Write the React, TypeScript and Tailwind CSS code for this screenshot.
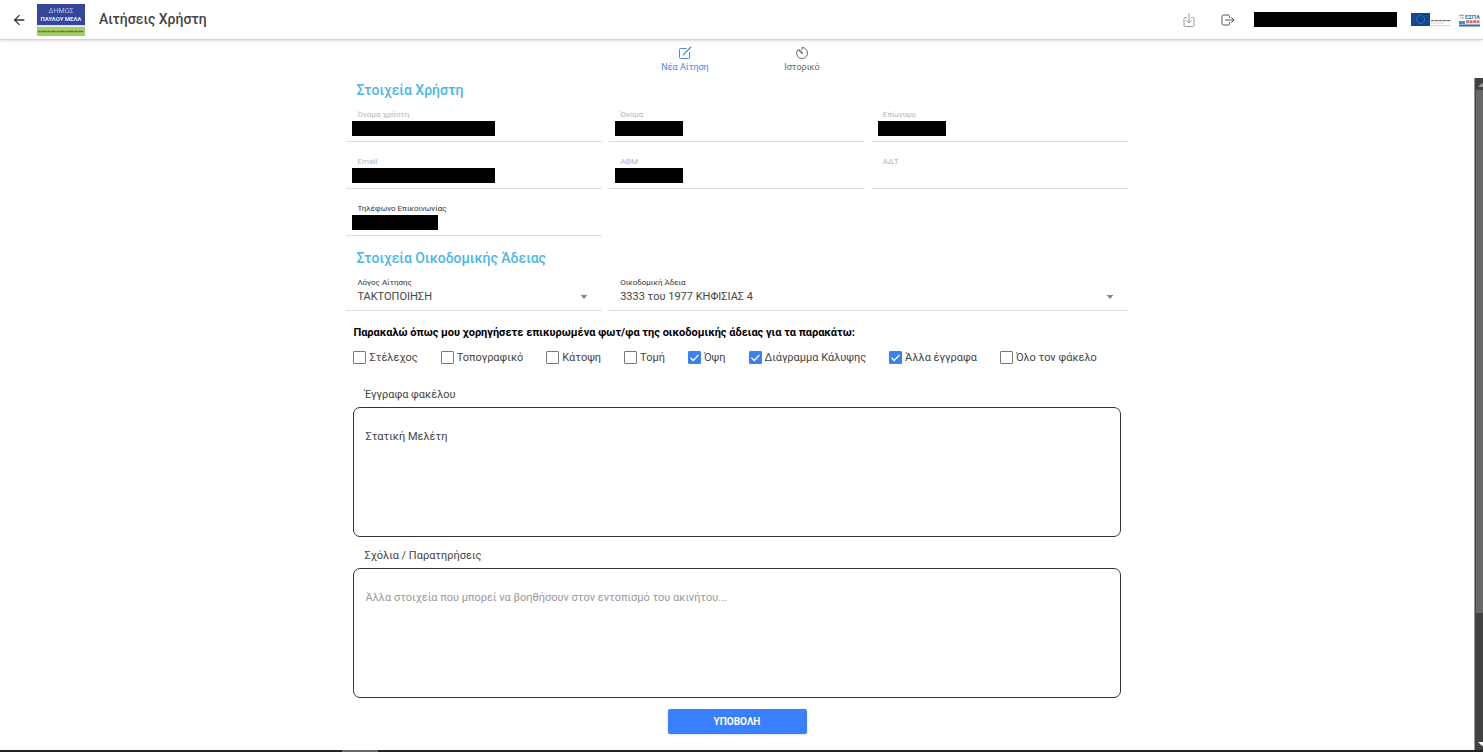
import { useState } from 'react'
import { IoDownloadOutline, IoLogOutOutline } from 'react-icons/io5'
import { MdArrowBack } from 'react-icons/md'

const userFields = [
  { id: 'username', label: 'Όνομα χρήστη', bar: 'w-[143px]', disabled: true },
  { id: 'firstName', label: 'Όνομα', bar: 'w-[68px]', disabled: true },
  { id: 'lastName', label: 'Επώνυμο', bar: 'w-[68px]', disabled: true },
  { id: 'email', label: 'Email', bar: 'w-[143px]', disabled: true },
  { id: 'afm', label: 'ΑΦΜ', bar: 'w-[68px]', disabled: true },
  { id: 'adt', label: 'ΑΔΤ', bar: '', disabled: true },
  { id: 'phone', label: 'Τηλέφωνο Επικοινωνίας', bar: 'w-[86px]', disabled: false },
]

const documents = [
  { id: 'stelexos', label: 'Στέλεχος', checked: false },
  { id: 'topografiko', label: 'Τοπογραφικό', checked: false },
  { id: 'katopsi', label: 'Κάτοψη', checked: false },
  { id: 'tomi', label: 'Τομή', checked: false },
  { id: 'opsi', label: 'Όψη', checked: true },
  { id: 'diagramma', label: 'Διάγραμμα Κάλυψης', checked: true },
  { id: 'alla', label: 'Άλλα έγγραφα', checked: true },
  { id: 'olo', label: 'Όλο τον φάκελο', checked: false },
]

const MunicipalityLogo = () => (
  <svg viewBox="0 0 48 32" className="h-8 w-12" role="img" aria-label="Δήμος Παύλου Μελά">
    <rect width="48" height="21" fill="#35459a" />
    <rect y="21" width="48" height="2" fill="#dfe5f2" />
    <rect y="23" width="48" height="9" fill="#a5cf63" />
    <text x="24" y="9" textAnchor="middle" fontSize="7" fill="#b9c3e6">ΔΗΜΟΣ</text>
    <text x="24" y="17" textAnchor="middle" fontSize="6" fontWeight="700" fill="#e6eaf8">ΠΑΥΛΟΥ ΜΕΛΑ</text>
    <path d="M1 27.500H47" stroke="#5d7a3c" strokeWidth="1.500" strokeDasharray="3 0.500 5 0.700" />
  </svg>
)

const EuLogo = () => (
  <svg viewBox="0 0 40 14" className="h-[14px] w-10" role="img" aria-label="Ευρωπαϊκή Ένωση">
    <rect width="19" height="13" fill="#0f479f" />
    <circle cx="9.500" cy="6.500" r="4" fill="none" stroke="#7f9374" strokeWidth="1" strokeDasharray="1 1.090" />
    <path d="M20 7.700H40" stroke="#777" strokeWidth="1.200" strokeDasharray="3 0.500 4 0.500" />
    <path d="M20 10.200H33M20 12.500H39" stroke="#ccc" strokeWidth="0.800" />
  </svg>
)

const EspaLogo = () => (
  <svg viewBox="0 0 22 14" className="h-[14px] w-[22px]" role="img" aria-label="ΕΣΠΑ 2014-2020">
    <path d="M0 3l3-1 2 1M1 5h4" stroke="#d98a8a" strokeWidth="1.200" fill="none" />
    <rect y="8" width="6" height="3" fill="#3f8fce" />
    <text x="6" y="6" fontSize="6" fontWeight="700" fill="#2a7fc4">ΕΣΠΑ</text>
    <path d="M7 8.800H21" stroke="#e07070" strokeWidth="3" strokeDasharray="3 0.500" />
    <rect y="11.500" width="21" height="2" fill="#2b6ca8" />
  </svg>
)

const NewRequestIcon = () => (
  <svg viewBox="0 0 14 14" className="h-[14px] w-[14px]" fill="none" stroke="currentColor" strokeLinecap="round">
    <path d="M8 2.500H2.500a1 1 0 0 0-1 1v8a1 1 0 0 0 1 1h8a1 1 0 0 0 1-1V6.500" />
    <path d="M12.800 1.200L6.200 7.800l-0.700 1.200" strokeWidth="1.300" />
  </svg>
)

const HistoryIcon = () => (
  <svg viewBox="0 0 14 14" className="h-[14px] w-[14px]" fill="none" stroke="currentColor" strokeLinecap="round">
    <path d="M7 3.500V1.500A5.500 5.500 0 1 1 2.600 3.700" />
    <path d="M4 4l3.200 3.200" strokeWidth="1.600" />
  </svg>
)

const Header = () => (
  <header className="relative z-10 flex h-10 shrink-0 items-center border-b border-[#d4d4d4] bg-white pr-[2px] shadow-sm">
    <button type="button" aria-label="Πίσω" className="ml-[11px] text-[#333]">
      <MdArrowBack className="h-4 w-4" />
    </button>
    <div className="ml-[10px]">
      <MunicipalityLogo />
    </div>
    <h1 className="ml-[14px] text-[14px] font-medium text-[#444]">Αιτήσεις Χρήστη</h1>
    <div className="ml-auto flex items-center">
      <button type="button" aria-label="Λήψη" className="text-[#999]">
        <IoDownloadOutline className="h-4 w-4" />
      </button>
      <button type="button" aria-label="Αποσύνδεση" className="ml-[23px] text-[#555]">
        <IoLogOutOutline className="h-4 w-4" />
      </button>
      <div className="ml-[18px] h-[15px] w-[143px] bg-black" />
      <div className="ml-[14px] flex items-center gap-2">
        <EuLogo />
        <EspaLogo />
      </div>
    </div>
  </header>
)

const Tabs = () => (
  <nav className="flex h-[38px] shrink-0 justify-center pt-[1px] pl-1 text-[9px]">
    <button type="button" className="flex w-[117px] flex-col items-center justify-center text-[#4a86e8]">
      <NewRequestIcon />
      <span className="leading-[14px]">Νέα Αίτηση</span>
    </button>
    <button type="button" className="flex w-[117px] flex-col items-center justify-center text-[#666]">
      <HistoryIcon />
      <span className="leading-[14px]">Ιστορικό</span>
    </button>
  </nav>
)

const Field = ({ id, label, bar, disabled }: (typeof userFields)[number]) => (
  <div className="relative h-[47px] border-b border-[#dedede] pt-[14px]">
    <label
      htmlFor={id}
      className={`block pl-[11px] text-[8px] leading-3 ${disabled ? 'text-[#b5b5b5]' : 'text-[#333]'}`}
    >
      {label}
    </label>
    <input id={id} disabled={disabled} className="block h-5 w-full px-[11px] text-[11px] outline-none" />
    {bar && <div className={`absolute bottom-[5px] left-[6px] h-[15px] bg-black ${bar}`} />}
  </div>
)

const SelectField = ({ id, label, value, className = '' }: { id: string; label: string; value: string; className?: string }) => (
  <div className={`relative h-[42px] border-b border-[#dedede] pt-2 ${className}`}>
    <label htmlFor={id} className="block pl-[11px] text-[8px] leading-3 text-[#333]">
      {label}
    </label>
    <select id={id} className="block h-4 w-full appearance-none bg-transparent pl-[11px] text-[11px] leading-4 text-[#444] outline-none">
      <option>{value}</option>
    </select>
    <svg viewBox="0 0 8 4" className="pointer-events-none absolute right-[14px] bottom-[11px] h-1 w-2">
      <path d="M0.500 0h7L4 4z" fill="#888" />
    </svg>
  </div>
)

const DocumentCheckbox = ({ id, label, checked }: (typeof documents)[number]) => {
  const [on, setOn] = useState(checked)

  return (
    <div className="flex items-center gap-[3px]">
      <span className="relative block h-[13px] w-[13px]">
        <input
          id={id}
          type="checkbox"
          checked={on}
          onChange={() => setOn(!on)}
          className="block h-[13px] w-[13px] appearance-none rounded-[1px] border border-[#777] checked:border-[#3880ff] checked:bg-[#3b7ff0]"
        />
        {on && (
          <svg viewBox="0 0 13 13" className="pointer-events-none absolute inset-0" fill="none">
            <path d="M2.500 6.800l2.700 2.700 5.300-5.500" stroke="#fff" strokeWidth="1.300" />
          </svg>
        )}
      </span>
      <label htmlFor={id} className="text-[11px] leading-[15px] text-[#444]">
        {label}
      </label>
    </div>
  )
}

const TextBox = ({ id, label, value, placeholder }: { id: string; label: string; value?: string; placeholder?: string }) => (
  <div className="px-[7px]">
    <label htmlFor={id} className="block pl-[11px] text-[11px] leading-6 text-[#444]">
      {label}
    </label>
    <textarea
      id={id}
      defaultValue={value}
      placeholder={placeholder}
      className="block h-[130px] w-full resize-none rounded-[7px] border border-[#333] px-[11px] py-[21px] text-[11px] leading-4 text-[#444] outline-none placeholder:text-[#999]"
    />
  </div>
)

const Scrollbar = () => (
  <div className="flex w-[9px] shrink-0 flex-col overflow-hidden border-l border-[#999] bg-[#424242]">
    <svg viewBox="0 0 8 12" className="h-3 w-2 shrink-0">
      <path d="M3 9l4-4 1 1v3z" fill="#999" />
    </svg>
    <div className="ml-[1px] h-[523px] bg-[#686868]" />
    <svg viewBox="0 0 8 10" className="mt-auto h-[10px] w-2 shrink-0">
      <path d="M3 2h5v3l-1 1z" fill="#fff" />
    </svg>
  </div>
)

const App = () => {
  return (
    <div className="flex h-screen flex-col bg-white font-['Roboto','Noto_Sans',sans-serif]">
      <Header />
      <Tabs />
      <div className="flex min-h-0 grow">
        <main className="min-w-0 grow overflow-hidden">
          <form className="mx-auto w-[53%]" onSubmit={(e) => e.preventDefault()}>
            <h2 className="pt-[1px] pl-[10px] text-[14px] leading-[22px] font-medium text-[#4db6e6]">Στοιχεία Χρήστη</h2>
            <div className="-mt-[6px] grid grid-cols-3 gap-x-[7px]">
              {userFields.map((field) => (
                <Field key={field.id} {...field} />
              ))}
            </div>

            <h2 className="pt-[11px] pl-[10px] text-[14px] leading-[22px] font-medium text-[#4db6e6]">Στοιχεία Οικοδομικής Άδειας</h2>
            <div className="grid grid-cols-3 gap-x-[7px]">
              <SelectField id="reason" label="Λόγος Αίτησης" value="ΤΑΚΤΟΠΟΙΗΣΗ" />
              <SelectField id="permit" label="Οικοδομική Άδεια" value="3333 του 1977 ΚΗΦΙΣΙΑΣ 4" className="col-span-2" />
            </div>

            <p className="mt-[13px] pl-[7px] text-[11px] leading-[18px] font-bold text-black">
              Παρακαλώ όπως μου χορηγήσετε επικυρωμένα φωτ/φα της οικοδομικής άδειας για τα παρακάτω:
            </p>
            <div className="mt-2 flex flex-wrap gap-x-[23px] pl-[7px]">
              {documents.map((doc) => (
                <DocumentCheckbox key={doc.id} {...doc} />
              ))}
            </div>

            <div className="mt-[18px] flex flex-col gap-[7px]">
              <TextBox id="files" label="Έγγραφα φακέλου" value="Στατική Μελέτη" />
              <TextBox
                id="comments"
                label="Σχόλια / Παρατηρήσεις"
                placeholder="Άλλα στοιχεία που μπορεί να βοηθήσουν στον εντοπισμό του ακινήτου..."
              />
            </div>

            <button
              type="submit"
              className="mx-auto mt-[11px] block h-[25px] w-[139px] rounded-[2px] bg-[#3880ff] text-[10px] font-bold text-white shadow"
            >
              ΥΠΟΒΟΛΗ
            </button>
          </form>
        </main>
        <Scrollbar />
      </div>
      <div className="h-[2px] shrink-0 bg-[#222] pl-[342px]">
        <div className="h-[2px] w-9 bg-[#666]" />
      </div>
    </div>
  )
}

export default App
